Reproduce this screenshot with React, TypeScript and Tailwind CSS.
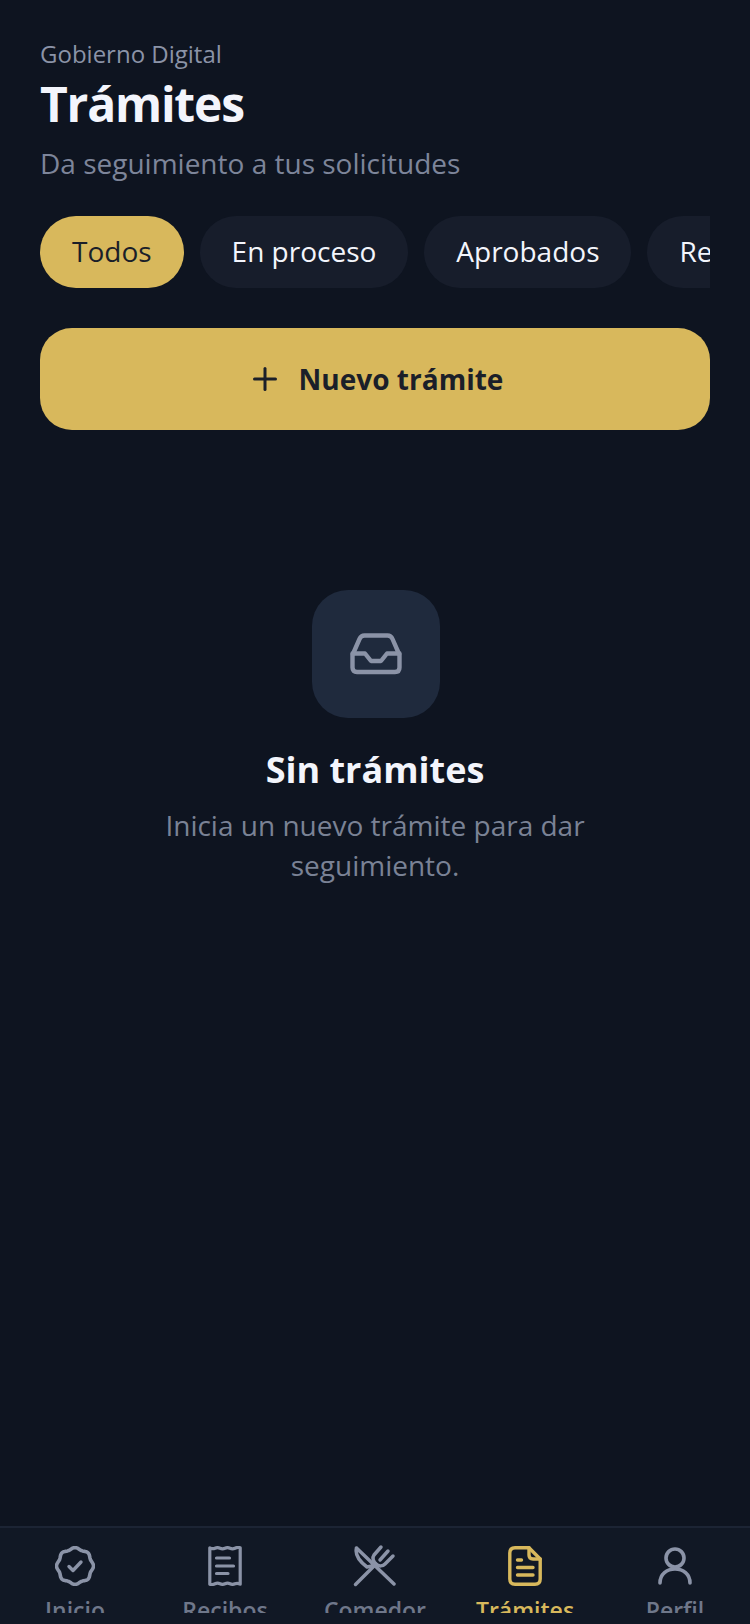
import { Plus } from 'lucide-react';

const font = { fontFamily: '"Open Sans", sans-serif' };

const filters = ['Todos', 'En proceso', 'Aprobados', 'Rechazados'];

function InboxIcon() {
  return (
    <svg width="52" height="42" viewBox="0 0 52 42" fill="none" stroke="currentColor" strokeWidth="4.4" strokeLinecap="round" strokeLinejoin="round">
      <path d="M2.5 22 L9.5 6 Q11 2.5 14.5 2.5 H37.5 Q41 2.5 42.5 6 L49.5 22 V34.5 Q49.5 39 45 39 H7 Q2.5 39 2.5 34.5 Z" />
      <path d="M2.5 20.5 H15 L21 28 H31 L37 20.5 H49.5" />
    </svg>
  );
}

// wavy badge outline, 8 scallops
const badgePath =
  Array.from({ length: 97 }, (_, i) => {
    const a = (i / 96) * Math.PI * 2;
    const r = 17.6 + 0.9 * Math.cos(a * 8);
    return `${i === 0 ? 'M' : 'L'}${(20 + r * Math.cos(a)).toFixed(2)} ${(20 + r * Math.sin(a)).toFixed(2)}`;
  }).join(' ') + ' Z';

function InicioIcon() {
  return (
    <svg width="40" height="40" viewBox="0 0 40 40" fill="none" stroke="currentColor" strokeWidth="3.6" strokeLinecap="round" strokeLinejoin="round">
      <path d={badgePath} />
      <path d="M14 20.5 L18 24.5 L26 16" strokeWidth="3.4" />
    </svg>
  );
}

function RecibosIcon() {
  return (
    <svg width="34" height="40" viewBox="0 0 34 40" fill="none" stroke="currentColor" strokeWidth="3.2" strokeLinecap="round" strokeLinejoin="round">
      <path d="M1.8 1.8 Q4.5 3.4 7 2.2 T12 2.2 T17 2.2 T22 2.2 T27 2.2 T32.2 1.8 V38.2 Q29.5 36.6 27 37.8 T22 37.8 T17 37.8 T12 37.8 T7 37.8 T1.8 38.2 Z" />
      <path d="M8.5 12 H21.5 M8.5 20 H25.5 M8.5 27.5 H20" />
    </svg>
  );
}

function ComedorIcon() {
  return (
    <svg width="44" height="44" viewBox="0 0 44 44" fill="none" stroke="currentColor" strokeWidth="3.5" strokeLinecap="round" strokeLinejoin="round">
      <path d="M3.5 4 L41 40 M3.5 4 C2 10 6 17 14 23 L19 22" />
      <path d="M2.5 40.5 L23 20" />
      <path d="M28 3 L21 11 C19 14 20 17 23 20 C26 23 30 22 32 20 L40 12 M35 7 L27 16" />
    </svg>
  );
}

function TramitesIcon() {
  return (
    <svg width="34" height="40" viewBox="0 0 34 40" fill="none" stroke="currentColor" strokeWidth="3.4" strokeLinecap="round" strokeLinejoin="round">
      <path d="M21 1.8 H7 Q1.8 1.8 1.8 7 V33 Q1.8 38.2 7 38.2 H27 Q32.2 38.2 32.2 33 V13 Z" />
      <path d="M21 1.8 V9 Q21 13 25 13 H32.2" />
      <path d="M9.5 14 H13.5 M9.5 21.5 H25 M9.5 29 H25" />
    </svg>
  );
}

function PerfilIcon() {
  return (
    <svg width="34" height="38" viewBox="0 0 34 38" fill="none" stroke="currentColor" strokeWidth="3.6" strokeLinecap="round" strokeLinejoin="round">
      <circle cx="17" cy="11" r="9" />
      <path d="M2 36 C2 27 9 22 17 22 C25 22 32 27 32 36" />
    </svg>
  );
}

const navItems = [
  { label: 'Inicio', icon: <InicioIcon />, active: false },
  { label: 'Recibos', icon: <RecibosIcon />, active: false },
  { label: 'Comedor', icon: <ComedorIcon />, active: false },
  { label: 'Trámites', icon: <TramitesIcon />, active: true },
  { label: 'Perfil', icon: <PerfilIcon />, active: false },
];

export default function App() {
  return (
    <div style={font} className="flex h-[1624px] w-[750px] flex-col overflow-hidden bg-[#0e1420]">
      <main className="flex-1 px-10 pt-[37px]">
        {/* Header */}
        <p className="text-[24px] leading-[33px] text-[#8b93a7]">Gobierno Digital</p>
        <h1 className="mt-[4px] text-[48px] font-bold leading-[60px] tracking-[-1.2px] text-[#f3f5fc]">Trámites</h1>
        <p className="mt-[9px] mb-[33px] text-[28px] leading-[40px] text-[#7d859a]">Da seguimiento a tus solicitudes</p>

        {/* Filters */}
        <div className="flex gap-4 overflow-hidden">
          {filters.map((f, idx) => (
            <div
              key={f}
              className={`flex h-[72px] shrink-0 items-center whitespace-nowrap rounded-full px-8 pb-[2px] text-[28px] ${
                idx === 0 ? 'bg-[#d8b85c] text-[#1b1f29]' : 'bg-[#171d2b] text-[#f3f5fc]'
              }`}
            >
              {f}
            </div>
          ))}
        </div>

        {/* New button */}
        <div className="mt-10 flex h-[102px] items-center justify-center gap-4 rounded-[32px] bg-[#d8b85c] text-[#1b1f29]">
          <Plus size={36} strokeWidth={2} />
          <span className="text-[28px] font-bold">Nuevo trámite</span>
        </div>

        {/* Empty state */}
        <div className="mt-[160px] flex flex-col items-center text-center">
          <div className="ml-[2px] flex h-[128px] w-[128px] items-center justify-center rounded-[36px] bg-[#1f2a3d] text-[#8b93a7]">
            <InboxIcon />
          </div>
          <h2 className="mt-[27px] text-[36px] font-bold leading-[50px] text-[#f3f5fc]">Sin trámites</h2>
          <p className="mt-[10px] w-[440px] text-[28px] leading-[40px] text-[#7a8295]">
            Inicia un nuevo trámite para dar seguimiento.
          </p>
        </div>
      </main>

      {/* Bottom nav */}
      <nav className="h-[98px] shrink-0 overflow-hidden border-t-2 border-[#1c2434] bg-[#111825]">
        <div className="flex h-[85px] overflow-hidden pt-[16px]">
          {navItems.map((item) => (
            <div
              key={item.label}
              className={`flex w-[150px] flex-col items-center ${item.active ? 'text-[#d8b85c]' : 'text-[#8b93a7]'}`}
            >
              <div className="flex h-[44px] shrink-0 items-center justify-center">{item.icon}</div>
              <span className={`mt-[6px] shrink-0 text-[23px] font-semibold leading-[32px] ${item.active ? 'font-bold' : 'text-[#6f778a]'}`}>
                {item.label}
              </span>
            </div>
          ))}
        </div>
      </nav>
    </div>
  );
}
